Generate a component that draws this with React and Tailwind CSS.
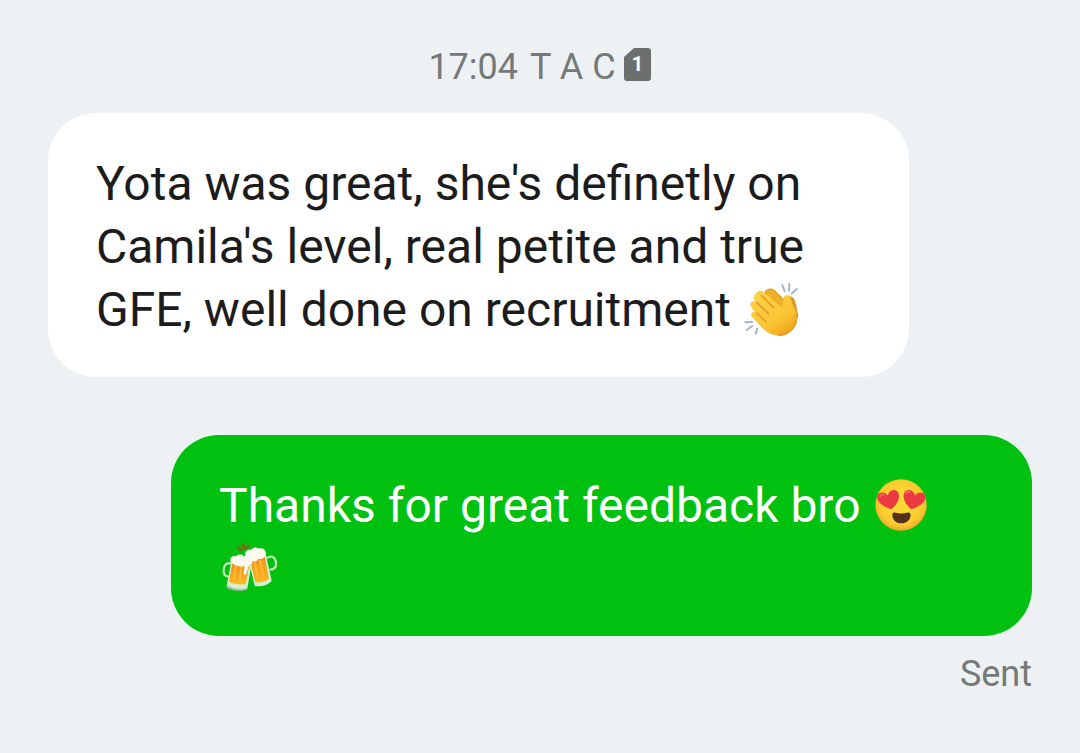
function ClapEmoji() {
  return (
    <svg role="img" aria-label="clapping hands" viewBox="27 15 174 174" className="inline-block size-[58px] align-[-12px]">
      <defs>
        <linearGradient id="skin" x1="0" y1="0" x2="0.7" y2="1">
          <stop offset="0" stopColor="#fdd24a" />
          <stop offset="0.7" stopColor="#fbc634" />
          <stop offset="1" stopColor="#efa51f" />
        </linearGradient>
      </defs>
      {/* back hand */}
      <path d="M92 50c8-12 24-12 32-3l30 30c-2-10 4-14 14-13 14 2 15 14 19 28l6 32-18 30-70-40z" fill="#d99a20" />
      <path d="M96 49c6-9 19-8 26 0l34 38-10 22-46-40z" fill="#efb02a" />
      {/* front hand */}
      <path
        d="M66 55c5-10 17-10 24-3l54 46c3-9 2-20 5-29 3-11 16-12 20-2 3 9 4 16 9 27 10 20 15 36 8 54-9 23-32 36-58 33-20-2-35-13-47-26l-26-28c-8-10-1-20 9-15l-13-17c-6-10 2-20 12-15-6-10-4-19 3-25z"
        fill="url(#skin)"
      />
      <path d="M68 82l36 35M68 114l29 27M83 62l36 36" stroke="#dc941f" strokeWidth="4" strokeLinecap="round" fill="none" />
      <path d="M187 120c6 32-21 62-55 61" stroke="#e99a20" strokeWidth="4" strokeLinecap="round" fill="none" />
      <path d="M145 30l7 19M166 27l-1 20M188 42l-15 14M34 142l21-1M38 165l17-12M70 160l-5 16" stroke="#a3b7c8" strokeWidth="6" strokeLinecap="round" fill="none" />
    </svg>
  );
}

function HeartEyesEmoji() {
  return (
    <svg role="img" aria-label="smiling face with heart eyes" viewBox="20 14 174 174" className="inline-block size-[58px] align-[-12px]">
      <defs>
        <radialGradient id="face" cx="0.5" cy="0.45" r="0.55">
          <stop offset="0.4" stopColor="#fdd835" />
          <stop offset="0.8" stopColor="#fbc92e" />
          <stop offset="1" stopColor="#efa62b" />
        </radialGradient>
      </defs>
      <circle cx="107" cy="101" r="77" fill="url(#face)" />
      <path d="M78 114C62 108 40 98 36 82c-3-14 10-24 24-16 2 1 5 4 7 7 2-9 8-16 17-17 14-1 20 12 16 27-3 12-13 24-22 31z" fill="#ec3a42" />
      <path d="M138 114c-9-7-19-19-22-31-4-15 2-28 16-27 9 1 15 8 17 17 2-3 5-6 7-7 14-8 27 2 24 16-4 16-26 26-42 32z" fill="#ec3a42" />
      <path d="M44 77c1-7 7-9 12-6M122 66c2-5 7-6 11-3" stroke="#ff7770" strokeWidth="4" strokeLinecap="round" fill="none" />
      <path d="M81 130c0-6 5-8 10-6 9 3 24 3 34 0 6-2 11 1 11 7-1 15-12 25-28 25s-27-11-27-26z" fill="#51301e" />
    </svg>
  );
}

function BeersEmoji() {
  return (
    <svg role="img" aria-label="clinking beer mugs" viewBox="27 14 174 174" className="inline-block size-[58px] align-[-12px]">
      <defs>
        <linearGradient id="beer" x1="0" y1="0" x2="0" y2="1">
          <stop offset="0" stopColor="#ef8c1c" />
          <stop offset="1" stopColor="#fbb91f" />
        </linearGradient>
      </defs>
      <path d="M101 43l-1-12M92 46l-7-6M110 41l4-6" stroke="#7a6a12" strokeWidth="8" strokeLinecap="round" />
      {/* right mug */}
      <path d="M170 71c15-9 24-3 27 9 4 16-1 25-16 26" fill="none" stroke="#b9e8b2" strokeWidth="7" strokeLinecap="round" />
      <path d="M114 68l51-17 20 88c-9 13-32 20-51 16z" fill="#d6efcf" />
      <path d="M119 73l44-12 14 72c-10 8-27 13-41 11z" fill="url(#beer)" />
      <path d="M134 85l10 47M151 80l9 47" stroke="#fdb935" strokeWidth="6" strokeLinecap="round" />
      <path d="M105 64c-2-12 8-20 18-17 5-9 17-10 24-4 13-4 21 5 20 16-2 13-12 17-22 14-3 7-10 10-17 7l-5 14-8-2z" fill="#fffaf0" />
      {/* left mug */}
      <path d="M61 87c-14-2-19 7-20 19-1 14 4 21 15 20" fill="none" stroke="#b9e8b2" strokeWidth="7" strokeLinecap="round" />
      <path d="M65 76l60 9-13 78c-16 8-46 3-62-9z" fill="#d6efcf" />
      <path d="M67 86l51 6-11 57c-16 3-38 0-50-7z" fill="url(#beer)" />
      <path d="M78 96l-7 42M94 99l-6 43" stroke="#fdb935" strokeWidth="6" strokeLinecap="round" />
      <path d="M50 152c16 12 46 16 62 8l-1 5c-12 8-49 5-62-6z" fill="#aebdad" />
      <path d="M62 82c-4-11 5-20 16-16 7-8 19-7 24 0 12-5 24 1 25 12 0 8-4 12-10 13l-8 27c-3 5-9 3-8-3l3-19c-14 1-32-1-42-14z" fill="#fffaf0" />
    </svg>
  );
}

function SimIcon() {
  return (
    <span className="relative flex h-[34px] w-7 items-center justify-center text-white">
      <svg viewBox="0 0 28 34" className="absolute inset-0 size-full" aria-hidden="true">
        <path d="M10 1H24Q27 1 27 4V31Q27 34 24 34H3Q0 34 0 31V10Z" fill="#6b6f6e" />
      </svg>
      <span className="relative text-xl leading-none font-bold">1</span>
    </span>
  );
}

function Bubble({ sent, children }) {
  return (
    <div className={`w-7/8 rounded-[48px] px-12 pt-[39px] pb-9 text-5xl leading-[63px] ${sent ? 'self-end bg-[#00c010] text-white' : 'bg-white text-[#1c1c1c]'}`}>
      <p>{children}</p>
    </div>
  );
}

function App() {
  return (
    <main className="flex min-h-screen flex-col bg-[#edf1f4] px-12 pt-[47px] font-['Roboto',sans-serif]">
      <div className="mb-[26px] flex items-start justify-center gap-2 text-4xl leading-10 text-[#757978]">
        <div className="flex gap-3">
          <time>17:04</time>
          <span>T A C</span>
        </div>
        <SimIcon />
      </div>
      <div className="flex flex-col gap-[58px]">
        <Bubble>
          Yota was great, she's definetly on Camila's level, real petite and true GFE, well done on recruitment <ClapEmoji />
        </Bubble>
        <Bubble sent>
          Thanks for great feedback bro <HeartEyesEmoji /> <BeersEmoji />
        </Bubble>
      </div>
      <p className="mt-4 text-right text-4xl leading-[44px] text-[#757978]">Sent</p>
    </main>
  );
}

export default App;
